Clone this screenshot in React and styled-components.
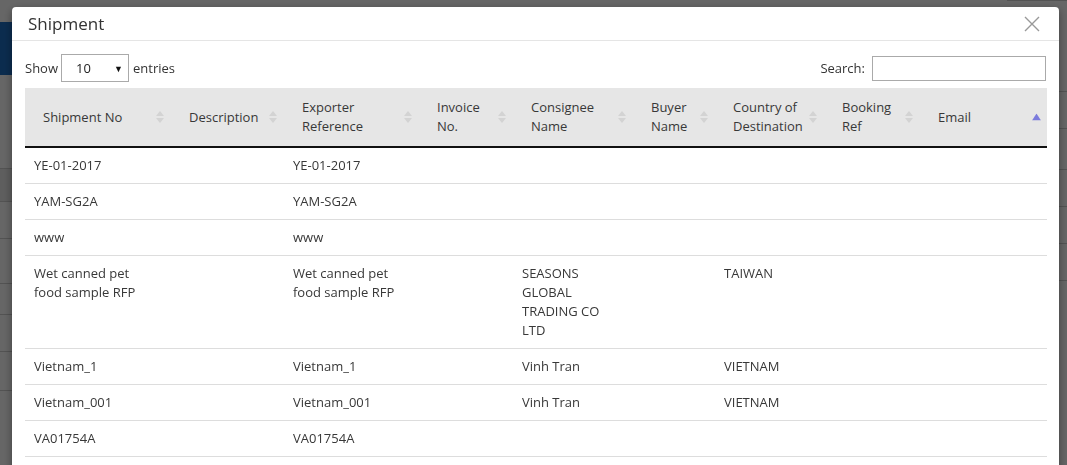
import React from "react";
import styled, { createGlobalStyle } from "styled-components";

const GlobalStyle = createGlobalStyle`
  html, body {
    margin: 0;
    padding: 0;
    height: 100%;
    overflow: hidden;
  }
  body {
    background: #ffffff;
    font-family: "Open Sans", "Noto Sans", "Liberation Sans", sans-serif;
    color: #333;
  }
`;

const columns = [
  { key: "no", label: ["Shipment No"], width: 146 },
  { key: "desc", label: ["Description"], width: 113 },
  { key: "ref", label: ["Exporter", "Reference"], width: 135 },
  { key: "inv", label: ["Invoice", "No."], width: 94 },
  { key: "cons", label: ["Consignee", "Name"], width: 120 },
  { key: "buyer", label: ["Buyer", "Name"], width: 82 },
  { key: "country", label: ["Country of", "Destination"], width: 109 },
  { key: "booking", label: ["Booking", "Ref"], width: 96 },
  { key: "email", label: ["Email"], width: 127, sorted: true },
];

const rows = [
  { no: "YE-01-2017", ref: "YE-01-2017" },
  { no: "YAM-SG2A", ref: "YAM-SG2A" },
  { no: "www", ref: "www" },
  {
    no: "Wet canned pet food sample RFP",
    ref: "Wet canned pet food sample RFP",
    cons: "SEASONS GLOBAL TRADING CO LTD",
    country: "TAIWAN",
  },
  { no: "Vietnam_1", ref: "Vietnam_1", cons: "Vinh Tran", country: "VIETNAM" },
  { no: "Vietnam_001", ref: "Vietnam_001", cons: "Vinh Tran", country: "VIETNAM" },
  { no: "VA01754A", ref: "VA01754A" },
];

/* page behind the dialog, only its edges show */
const Page = styled.div`
  display: grid;
  grid-template-columns: 60px 1fr 60px;
  height: 100vh;
`;

const SideColumn = styled.div`
  display: flex;
  flex-direction: column;
  padding-top: ${(p) => p.top || 0}px;
`;

const BrandTile = styled.div`
  height: 53px;
  background: #1d6fc4;
`;

const SideGap = styled.div`
  height: ${(p) => p.h}px;
`;

const SideRow = styled.div`
  height: ${(p) => p.h || 36}px;
  border-top: 1px solid #cfcfcf;
  background: ${(p) => (p.shade ? "#eaeaea" : "#fff")};
`;

const Overlay = styled.div`
  position: fixed;
  inset: 0;
  background: rgba(0, 0, 0, 0.6);
  display: flex;
  align-items: flex-start;
  padding: 7px 0 0 12px;
`;

const Dialog = styled.div`
  width: 1047px;
  min-height: 520px;
  background: #fff;
  border-radius: 4px 4px 0 0;
  box-shadow: 0 3px 9px rgba(0, 0, 0, 0.4);
`;

const DialogHeader = styled.div`
  height: 33px;
  border-bottom: 1px solid #e5e5e5;
  display: flex;
  align-items: center;
  justify-content: space-between;
  padding: 0 19px 0 16px;
`;

const Title = styled.h4`
  margin: 0;
  font-size: 17px;
  font-weight: 400;
  color: #333;
  line-height: 24px;
`;

const CloseButton = styled.button`
  border: 0;
  background: none;
  padding: 0;
  width: 16px;
  height: 16px;
  display: flex;
  cursor: pointer;
`;

const DialogBody = styled.div`
  padding: 13px 12px 0 13px;
`;

const Controls = styled.div`
  display: flex;
  justify-content: space-between;
  align-items: center;
  height: 28px;
  margin-bottom: 6px;
  font-size: 13px;
  color: #333;
`;

const Field = styled.label`
  display: flex;
  align-items: center;
  gap: ${(p) => p.gap || 4}px;
`;

const SelectBox = styled.div`
  height: 26px;
  width: 47px;
  border: 1px solid #aaa;
  display: flex;
  align-items: center;
  justify-content: space-between;
  padding: 0 5px 0 14px;
  font-size: 13px;
  color: #222;
`;

const Caret = styled.span`
  font-size: 9px;
  color: #111;
`;

const EntriesText = styled.span`
  margin-left: 1px;
`;

const SearchInput = styled.input`
  width: 174px;
  height: 25px;
  border: 1px solid #aaa;
  padding: 0;
  margin: 0 1px 0 0;
  outline: none;
`;

const Table = styled.table`
  width: 1022px;
  border-collapse: collapse;
  table-layout: fixed;
  font-size: 13px;
  color: #383838;
`;

const Th = styled.th`
  position: relative;
  background: #e6e6e6;
  text-align: left;
  font-weight: 400;
  line-height: 19px;
  padding: 10px 18px 10px 18px;
  border-bottom: 2px solid #111;
  vertical-align: middle;
`;

const Sorter = styled.span`
  position: absolute;
  right: ${(p) => (p.active ? 6 : 7)}px;
  top: 50%;
  transform: translateY(-50%);
  display: flex;
  flex-direction: column;
  gap: 2px;
`;

const Td = styled.td`
  line-height: 19px;
  padding: 8px 18px 8px 9px;
  border-top: 1px solid #ddd;
  border-bottom: 1px solid #ddd;
  vertical-align: top;
  background: #fff;
`;

const Tri = ({ up, color }) => (
  <svg width="8" height="5" viewBox="0 0 8 5">
    <path d={up ? "M0 5 L4 0 L8 5 Z" : "M0 0 L4 5 L8 0 Z"} fill={color} />
  </svg>
);

const SortIcon = ({ active }) =>
  active ? (
    <Sorter active>
      <svg width="9" height="7" viewBox="0 0 9 7">
        <path d="M0 7 L4.5 0 L9 7 Z" fill="#7b7bdc" />
      </svg>
    </Sorter>
  ) : (
    <Sorter>
      <Tri up color="#d3d3d3" />
      <Tri color="#d3d3d3" />
    </Sorter>
  );

export default function App() {
  return (
    <>
      <GlobalStyle />
      <Page>
        <SideColumn top={22}>
          <BrandTile />
          <SideGap h={93} />
          <SideRow h={32} shade />
          <SideRow />
          <SideRow h={44} />
          <SideRow h={30} />
          <SideRow h={36} />
          <SideRow h={38} />
          <SideRow />
        </SideColumn>
        <div />
        <SideColumn>
          <SideRow h={90} />
          <SideRow h={36} />
          <SideRow h={40} />
          <SideRow h={36} />
          <SideRow h={36} />
          <SideRow h={36} />
          <SideRow h={36} />
        </SideColumn>
      </Page>
      <Overlay>
        <Dialog role="dialog">
          <DialogHeader>
            <Title>Shipment</Title>
            <CloseButton aria-label="Close">
              <svg width="16" height="16" viewBox="0 0 16 16">
                <path
                  d="M1 1 L15 15 M15 1 L1 15"
                  stroke="#999"
                  strokeWidth="1.4"
                  fill="none"
                />
              </svg>
            </CloseButton>
          </DialogHeader>
          <DialogBody>
            <Controls>
              <Field gap={3}>
                Show
                <SelectBox>
                  <span>10</span>
                  <Caret>▼</Caret>
                </SelectBox>
                <EntriesText>entries</EntriesText>
              </Field>
              <Field gap={7}>
                Search:
                <SearchInput type="search" />
              </Field>
            </Controls>
            <Table>
              <colgroup>
                {columns.map((c) => (
                  <col key={c.key} style={{ width: c.width }} />
                ))}
              </colgroup>
              <thead>
                <tr>
                  {columns.map((c) => (
                    <Th key={c.key}>
                      {c.label.map((l, i) => (
                        <React.Fragment key={i}>
                          {i > 0 && <br />}
                          {l}
                        </React.Fragment>
                      ))}
                      <SortIcon active={c.sorted} />
                    </Th>
                  ))}
                </tr>
              </thead>
              <tbody>
                {rows.map((r, i) => (
                  <tr key={i}>
                    {columns.map((c) => (
                      <Td key={c.key}>{r[c.key] || ""}</Td>
                    ))}
                  </tr>
                ))}
              </tbody>
            </Table>
          </DialogBody>
        </Dialog>
      </Overlay>
    </>
  );
}
